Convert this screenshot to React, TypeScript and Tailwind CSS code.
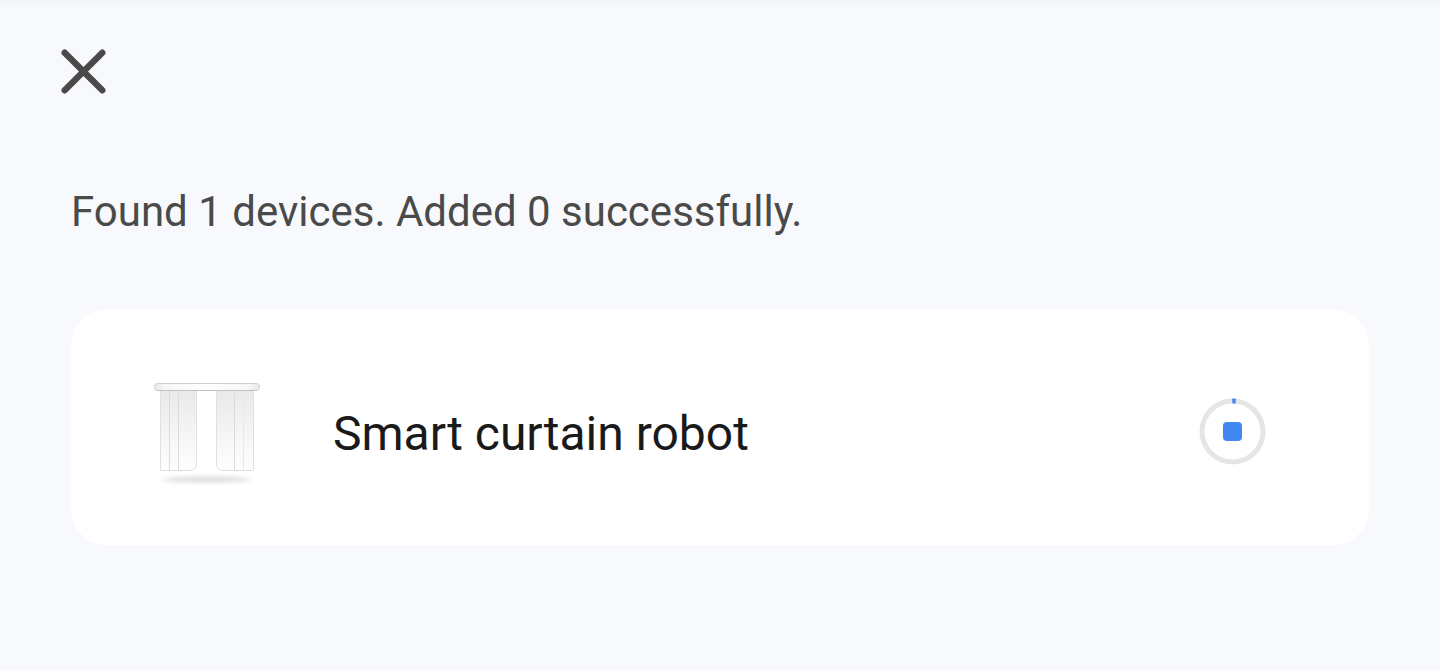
function CurtainIcon() {
  return (
    <svg className="size-28 shrink-0" viewBox="0 0 112 112" fill="none" aria-hidden="true">
      <defs>
        <linearGradient id="fabric" x1="0" y1="14" x2="0" y2="94" gradientUnits="userSpaceOnUse">
          <stop offset="0" stopColor="#e9e9e9" />
          <stop offset="0.5" stopColor="#f4f4f4" />
          <stop offset="1" stopColor="#fefefe" />
        </linearGradient>
        <linearGradient id="rail" x1="3" y1="0" x2="109" y2="0" gradientUnits="userSpaceOnUse">
          <stop offset="0" stopColor="#e6e6e6" />
          <stop offset="0.1" stopColor="#f6f6f6" />
          <stop offset="0.5" stopColor="#ffffff" />
          <stop offset="0.9" stopColor="#f6f6f6" />
          <stop offset="1" stopColor="#e6e6e6" />
        </linearGradient>
        <filter id="soft" x="-20%" y="-150%" width="140%" height="400%">
          <feGaussianBlur stdDeviation="4 2" />
        </filter>
      </defs>
      <ellipse cx="55.5" cy="102.5" rx="44" ry="3" fill="#dcdcdc" filter="url(#soft)" />
      <path d="M9.5 13V93.5H40.5Q45.500 92.5 45.5 87.500V13Z" fill="url(#fabric)" stroke="#e0e0e0" />
      <path d="M102.5 13V93.5H71.5Q65.500 92.5 65.5 87.500V13Z" fill="url(#fabric)" stroke="#e0e0e0" />
      <path d="M18.5 14V93M27.5 14V93M83.5 14V93" stroke="#dadada" />
      <path d="M92.5 14V93" stroke="#e8e8e8" />
      <rect x="3.5" y="6.5" width="105" height="7" rx="3" fill="url(#rail)" stroke="#cfcfcf" />
      <path d="M6 13.5H106" stroke="#c2c2c2" />
    </svg>
  );
}

function StopIcon() {
  return (
    <svg className="size-[72px]" viewBox="0 0 72 72" fill="none" aria-hidden="true">
      <circle cx="35.5" cy="34.5" r="30.5" stroke="#e5e5e5" strokeWidth="5" />
      <path d="M35.3 4.1Q37 4 38.7 4.2" stroke="#4189f0" strokeWidth="5" />
      <rect x="26" y="25" width="19" height="19" rx="4" fill="#4189f0" />
    </svg>
  );
}

export default function App() {
  return (
    <div className="min-h-screen border-t-[6px] border-[#f5f6fa] bg-[#f8f9fd] font-[Roboto,sans-serif]">
      <header className="flex px-12 pt-[30px]">
        <button type="button" aria-label="Close" className="size-[72px]">
          <svg className="size-[72px]" viewBox="0 0 72 72" fill="none" aria-hidden="true">
            <path d="M16.7 16.7L54.3 54.3M54.3 16.7L16.7 54.3" stroke="#4a4a4a" strokeWidth="6.4" strokeLinecap="round" />
          </svg>
        </button>
      </header>
      <main className="px-[71px] pb-16">
        <p className="pt-20 text-[42px] leading-12 text-[#4a4a4a]">Found 1 devices. Added 0 successfully.</p>
        <ul className="pt-[73px]">
          <li className="flex items-center rounded-[36px] bg-white pt-[68px] pr-[100px] pb-14 pl-20">
            <CurtainIcon />
            <h2 className="flex-1 pt-0.5 pl-[70px] text-5xl text-[#1a1a1a]">Smart curtain robot</h2>
            <button type="button" aria-label="Stop adding Smart curtain robot">
              <StopIcon />
            </button>
          </li>
        </ul>
      </main>
    </div>
  );
}
